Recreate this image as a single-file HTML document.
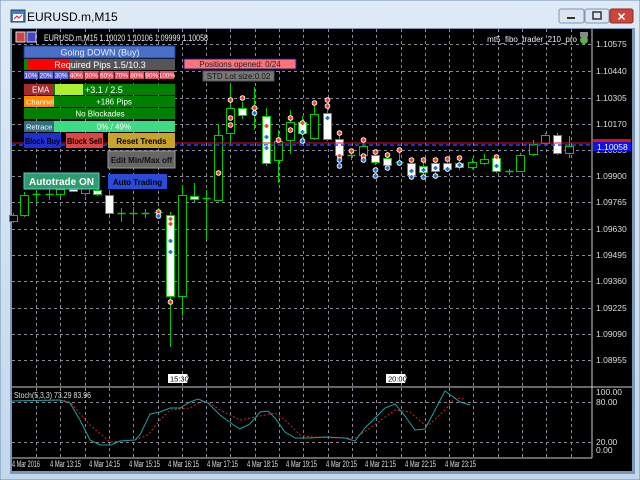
<!DOCTYPE html>
<html><head><meta charset="utf-8"><style>
html,body{margin:0;padding:0;width:640px;height:480px;overflow:hidden;background:#bcd3ea;font-family:"Liberation Sans",sans-serif}
svg{position:absolute;left:0;top:0}
text{font-family:"Liberation Sans",sans-serif}
</style></head><body>
<svg id="s" width="640" height="480" viewBox="0 0 640 480">
<defs><linearGradient id="tb" x1="0" y1="0" x2="0" y2="1"><stop offset="0" stop-color="#dfeaf6"/><stop offset="1" stop-color="#c3d7ec"/></linearGradient></defs>
<rect x="0" y="0" width="640" height="480" fill="url(#tb)"/>
<rect x="0" y="0" width="640" height="480" fill="none" stroke="#6d8db0"/>
<rect x="11" y="10" width="14" height="12" fill="#3a7fd0" stroke="#245"/><rect x="13" y="14" width="10" height="7" fill="#fff"/><path d="M14 19 L17 16 L19 18 L22 15" stroke="#d22" fill="none"/>
<text x="27" y="21" font-size="12" fill="#000">EURUSD.m,M15</text>
<rect x="559" y="9" width="25" height="14" rx="2" fill="#dbe6f2" stroke="#7e95b0"/><rect x="567" y="17" width="8" height="2" fill="#333"/>
<rect x="585" y="9" width="24" height="14" rx="2" fill="#dbe6f2" stroke="#7e95b0"/><rect x="593" y="12" width="8" height="7" fill="none" stroke="#333" stroke-width="1.5"/>
<rect x="610" y="9" width="23" height="14" rx="2" fill="#c9463a" stroke="#8a2a22"/><text x="621.5" y="20.5" font-size="11" font-weight="bold" fill="#fff" text-anchor="middle">✕</text>
<rect x="10" y="28" width="625" height="446" fill="#7c98b8"/>
<rect x="12" y="29" width="620" height="442" fill="#000"/>
<g id="grid"></g>
<line x1="592" y1="29" x2="592" y2="458" stroke="#ccc"/>
<line x1="12" y1="387" x2="632" y2="387" stroke="#ccc"/>
<line x1="12" y1="458" x2="592" y2="458" stroke="#ccc"/>
<g font-size="8.5" fill="#ddd">
<text x="596" y="47">1.10575</text><text x="596" y="74">1.10440</text><text x="596" y="101">1.10305</text><text x="596" y="127">1.10170</text><text x="596" y="153">1.10035</text><text x="596" y="179">1.09900</text><text x="596" y="205">1.09765</text><text x="596" y="232">1.09630</text><text x="596" y="258">1.09495</text><text x="596" y="284">1.09360</text><text x="596" y="311">1.09225</text><text x="596" y="337">1.09090</text><text x="596" y="363">1.08955</text>
<text x="596" y="395">100.00</text><text x="596" y="405">80.00</text><text x="596" y="445">20.00</text><text x="596" y="453">0.00</text>
</g>
<g font-size="9" fill="#ddd">
<text x="12" y="467" textLength="28" lengthAdjust="spacingAndGlyphs">4 Mar 2016</text><text x="50" y="467" textLength="31" lengthAdjust="spacingAndGlyphs">4 Mar 13:15</text><text x="89" y="467" textLength="31" lengthAdjust="spacingAndGlyphs">4 Mar 14:15</text><text x="129" y="467" textLength="31" lengthAdjust="spacingAndGlyphs">4 Mar 15:15</text><text x="168" y="467" textLength="31" lengthAdjust="spacingAndGlyphs">4 Mar 16:15</text><text x="207" y="467" textLength="31" lengthAdjust="spacingAndGlyphs">4 Mar 17:15</text><text x="247" y="467" textLength="31" lengthAdjust="spacingAndGlyphs">4 Mar 18:15</text><text x="286" y="467" textLength="31" lengthAdjust="spacingAndGlyphs">4 Mar 19:15</text><text x="326" y="467" textLength="31" lengthAdjust="spacingAndGlyphs">4 Mar 20:15</text><text x="365" y="467" textLength="31" lengthAdjust="spacingAndGlyphs">4 Mar 21:15</text><text x="405" y="467" textLength="31" lengthAdjust="spacingAndGlyphs">4 Mar 22:15</text><text x="445" y="467" textLength="31" lengthAdjust="spacingAndGlyphs">4 Mar 23:15</text>
</g>
<g id="candles"></g>
<line x1="12" y1="143" x2="592" y2="143" stroke="#e01010"/>
<line x1="12" y1="145" x2="592" y2="145" stroke="#2a3cff" stroke-dasharray="4,3" stroke-width="1.5"/>
<rect x="593" y="139" width="38" height="3" fill="#e01010"/>
<rect x="593" y="142" width="38" height="9" fill="#1010ee"/>
<text x="597" y="150" font-size="8.5" fill="#fff">1.10058</text>
<g id="marks"></g>
<path d="M168 374 H187 L189 378 L187 383 H168 Z" fill="#fff"/><text x="170" y="381.5" font-size="7.5" fill="#000">15:30</text>
<path d="M386 374 H405 L407 378 L405 383 H386 Z" fill="#fff"/><text x="388" y="381.5" font-size="7.5" fill="#000">20:00</text>
<text x="14" y="398" font-size="8.5" fill="#ddd" textLength="77" lengthAdjust="spacingAndGlyphs">Stoch(5,3,3) 73.29 83.96</text>
<polyline fill="none" stroke="#e02020" stroke-dasharray="2,2" points="12,401 60,400 70,402 90,425 110,442 135,440 148,435 160,420 170,410 190,408 200,402 208,402 220,410 240,420 260,416 275,413 285,420 300,435 310,437 340,438 355,438 370,428 395,410 410,412 425,425 430,424 445,410 455,398 465,399"/>
<polyline fill="none" stroke="#20a0a0" points="12,401 60,400 70,403 80,420 90,440 100,445 111,445 120,441 135,440 140,435 150,414 160,412 170,408 180,408 190,402 198,399 208,403 220,415 235,426 240,429 250,424 260,412 268,411 275,418 285,432 295,438 310,438 325,437 345,438 355,441 365,428 385,408 395,404 405,416 415,430 425,429 445,391 460,402 470,405"/>
<rect x="16" y="32" width="9" height="10" fill="#c44" stroke="#ddd"/><rect x="27" y="32" width="9" height="10" fill="#44c" stroke="#ddd"/>
<text x="44" y="41" font-size="9" fill="#eee" textLength="164" lengthAdjust="spacingAndGlyphs">EURUSD.m,M15  1.10020 1.10106 1.09999 1.10058</text>
<text x="577" y="42" font-size="8" fill="#eee" text-anchor="end">mt5_fibo_trader_210_pro</text>
<circle cx="584" cy="40" r="4" fill="#5ab04a"/><rect x="580" y="32" width="8" height="5" fill="#888"/>
<g font-size="8.5">
<rect x="24" y="46" width="151" height="12" fill="#4a6fc6" stroke="#223c90"/><text x="100" y="55.5" fill="#e8eeff" text-anchor="middle" font-size="9">Going DOWN (Buy)</text>
<rect x="24" y="59" width="151" height="11" fill="#555"/><rect x="24" y="59" width="3" height="11" fill="#080"/><rect x="28" y="59" width="41" height="11" fill="#f00"/><text x="100" y="68" fill="#fff" text-anchor="middle" font-size="9">Required Pips 1.5/10.3</text>
</g>
<g id="pct"></g>
<g font-size="8">
<rect x="24" y="84" width="151" height="11" fill="#008000"/><rect x="24" y="84" width="30" height="11" fill="#a52a2a"/><rect x="55" y="84" width="28" height="11" fill="#adf031"/>
<text x="32" y="92.5" fill="#fff">EMA</text><text x="85" y="93" fill="#fff" font-size="9">+3.1 / 2.5</text>
<rect x="24" y="96" width="151" height="11" fill="#008000"/><rect x="24" y="96" width="30" height="11" fill="#ff8c00"/>
<text x="26" y="104.5" fill="#fff" font-size="7.5">Channel</text><text x="114" y="104.5" fill="#fff" text-anchor="middle">+186 Pips</text>
<rect x="24" y="108" width="151" height="11" fill="#008000"/><text x="100" y="116.5" fill="#fff" text-anchor="middle">No Blockades</text>
<rect x="24" y="121" width="151" height="11" fill="#3ddc84"/><rect x="24" y="121" width="30" height="11" fill="#2f6f7f"/>
<text x="26" y="129.5" fill="#fff" font-size="7.5">Retrace</text><text x="114" y="129.5" fill="#fff" text-anchor="middle">0% / 49%</text>
</g>
<g font-size="8" font-weight="bold">
<rect x="24" y="133" width="37" height="15" fill="#2030d0"/><text x="42.5" y="144" fill="#000" text-anchor="middle" textLength="35" lengthAdjust="spacingAndGlyphs">Block Buy</text>
<rect x="66" y="133" width="37" height="15" fill="#e04545"/><text x="84.5" y="144" fill="#000" text-anchor="middle" textLength="35" lengthAdjust="spacingAndGlyphs">Block Sell</text>
<rect x="108" y="133" width="67" height="15" fill="#c9a42a"/><text x="141.5" y="144" fill="#000" text-anchor="middle">Reset Trends</text>
<rect x="108" y="151" width="67" height="17" fill="#666" stroke="#999"/><text x="141.5" y="163" fill="#111" text-anchor="middle">Edit Min/Max off</text>
<rect x="24" y="173" width="75" height="16" fill="#2e9c6e" stroke="#5cc"/><text x="61.5" y="185" fill="#fff" text-anchor="middle" font-size="10">Autotrade ON</text>
<rect x="108" y="174" width="59" height="15" fill="#2a4ad8"/><text x="137.5" y="185" fill="#000" text-anchor="middle">Auto Trading</text>
</g>
<g font-size="8">
<rect x="184" y="59" width="112" height="10" fill="#ff7575" stroke="#1a1aa0"/><text x="240" y="67" fill="#222" text-anchor="middle">Positions opened: 0/24</text>
<rect x="203" y="71" width="71" height="10" fill="#777" stroke="#555"/><text x="238.5" y="79" fill="#111" text-anchor="middle">STD Lot size:0.02</text>
</g>
</svg>
<script>
var NS="http://www.w3.org/2000/svg";
function el(p,t,a){var e=document.createElementNS(NS,t);for(var k in a)e.setAttribute(k,a[k]);p.appendChild(e);return e;}
var g=document.getElementById('grid');
var xs=[];for(var x=36;x<592;x+=24.3)xs.push(Math.round(x)+0.5);
xs.forEach(function(x){el(g,'line',{x1:x,y1:29,x2:x,y2:386,stroke:'#889','stroke-dasharray':'3,3'});el(g,'line',{x1:x,y1:388,x2:x,y2:457,stroke:'#889','stroke-dasharray':'3,3'});});
[44,71,98,124,150,176,202,229,255,281,308,334,360].forEach(function(y){el(g,'line',{x1:12,y1:y+.5,x2:592,y2:y+.5,stroke:'#889','stroke-dasharray':'3,3'});});
[402,442].forEach(function(y){el(g,'line',{x1:12,y1:y+.5,x2:592,y2:y+.5,stroke:'#889','stroke-dasharray':'3,3'});});
var c=document.getElementById('candles');
var C=[[13,213,223,215,221,'g'],[24,192,217,195,215,'g'],[36,190,203,194,195,'x'],[49,188,200,194,195,'x'],[60,187,197,189,194,'g'],[73,187,192,189,191,'w'],[85,185,196,187,193,'g'],[97,188,196,190,194,'w'],[109,190,215,195,213,'w'],[121,208,222,213,214,'x'],[133,207,222,213,214,'x'],[145,209,218,213,214,'x'],[158,208,216,212,213,'x'],[170,212,347,215,296,'w'],[182,186,316,195,296,'g'],[194,183,202,196,199,'w'],[206,190,240,198,199,'x'],[218,124,200,135,200,'g'],[230,83,145,108,133,'g'],[242,102,119,108,115,'w'],[254,87,130,108,112,'x'],[266,108,166,116,163,'w'],[278,130,183,141,160,'g'],[290,110,154,122,140,'g'],[302,116,138,122,133,'w'],[314,104,140,114,138,'g'],[327,104,141,113,139,'w'],[339,133,160,139,155,'w'],[351,150,160,155,156,'x'],[363,141,159,146,155,'g'],[375,150,165,155,162,'w'],[387,152,168,158,165,'w'],[399,148,166,162,164,'x'],[411,160,178,163,175,'w'],[423,160,175,166,172,'w'],[435,160,175,163,171,'w'],[447,158,172,163,169,'w'],[459,158,170,163,167,'w'],[472,158,169,162,167,'g'],[484,154,165,159,163,'g'],[496,155,173,158,171,'w'],[509,169,175,171,172,'x'],[520,153,172,155,171,'g'],[533,140,156,144,154,'g'],[545,133,145,135,143,'g'],[557,133,155,135,153,'w'],[569,136,158,146,153,'g']];
C.forEach(function(d){var x=d[0]+.5;el(c,'line',{x1:x,y1:d[1],x2:x,y2:d[2],stroke:'#0c0'});
 if(d[5]=='x'){el(c,'line',{x1:x-4,y1:d[3]+.5,x2:x+4,y2:d[3]+.5,stroke:'#0c0','stroke-width':1.5});}
 else el(c,'rect',{x:x-4,y:d[3]+.5,width:8,height:Math.max(1,d[4]-d[3]),fill:d[5]=='w'?'#fff':'#000',stroke:'#0c0'});});
var m=document.getElementById('marks');
function mk(x,y,col){el(m,'circle',{cx:x+.5,cy:y,r:2.8,fill:'#fff'});el(m,'path',{d:'M'+(x-1.5)+' '+y+'h4M'+(x+.5)+' '+(y-2)+'v4',stroke:col,'stroke-width':1.8});}
var R='#f04020',B='#1a70d0';
[[158,212,R],[170,219,R],[170,224,R],[170,302,R],[218,173,R],[230,100,R],[230,118,R],[230,125,R],[242,98,R],[254,108,R],[266,126,R],[278,140,R],[290,118,R],[290,130,R],[302,123,R],[314,103,R],[327,100,R],[327,106,R],[339,133,R],[339,156,R],[351,151,R],[363,140,R],[363,156,R],[375,152,R],[387,155,R],[399,150,R],[411,160,R],[423,160,R],[435,160,R],[447,159,R],[459,158,R],[496,157,R]].forEach(function(a){mk(a[0],a[1],a[2]);});
[[158,216,B],[170,241,B],[170,252,B],[254,113,B],[266,137,B],[266,148,B],[302,132,B],[302,141,B],[327,118,B],[339,160,B],[339,166,B],[363,160,B],[375,170,B],[375,176,B],[387,168,B],[399,163,B],[411,171,B],[411,177,B],[423,170,B],[423,177,B],[435,168,B],[435,176,B],[447,169,B],[459,165,B],[496,166,B]].forEach(function(a){mk(a[0],a[1],a[2]);});
var p=document.getElementById('pct');var labels=['10%','20%','30%','40%','50%','60%','70%','80%','90%','100%'];
labels.forEach(function(l,i){var x=24+i*15.1;el(p,'rect',{x:x,y:71,width:14.3,height:8,fill:i<3?'#5a60d8':'#e05060'});var t=el(p,'text',{x:x+7,y:77.5,'font-size':6.5,fill:'#fff','text-anchor':'middle'});t.textContent=l;});
</script>
</body></html>
